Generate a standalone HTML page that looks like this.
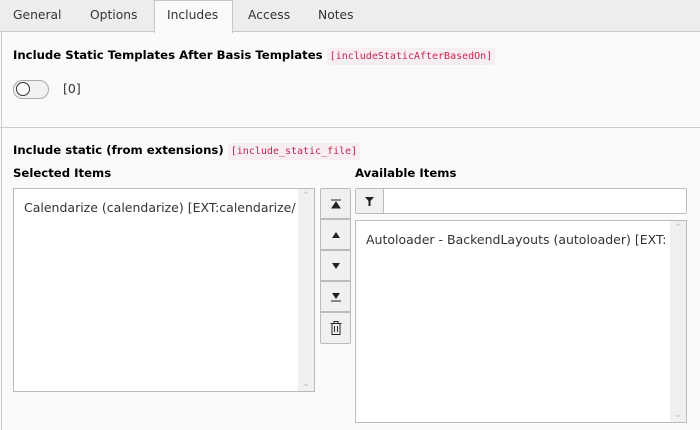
<!DOCTYPE html>
<html><head><meta charset="utf-8"><style>
*{box-sizing:border-box;margin:0;padding:0}
body{width:700px;height:430px;overflow:hidden;background:#fafafa;font-family:"DejaVu Sans",Verdana,sans-serif;font-size:12.5px;color:#333;position:relative}
.abs{position:absolute}
.tabs{left:0;top:0;width:700px;height:32px;background:#ededed;border-bottom:1px solid #c8c8c8}
.tab{position:absolute;top:8px;font-size:12.3px;color:#333}
.active{left:154px;top:0;width:79px;height:33px;background:#fafafa;border:1px solid #c8c8c8;border-bottom:none}
.lbl{font-weight:bold;font-size:11.7px;color:#000}
code{font-family:"DejaVu Sans Mono","Liberation Mono",monospace;font-size:10px;color:#c7254e;background:#f7eef1;padding:3px 3px;border-radius:2px;font-weight:normal}
.box{background:#fff;border:1px solid #bbb}
.sb{position:absolute;right:0;top:0;bottom:0;width:16px;background:#f0f0f0;color:#bbb;font-size:9px;text-align:center}
.btn{position:absolute;left:320px;width:31px;height:31px;background:#f0f0f0;border:1px solid #bbb;display:flex;align-items:center;justify-content:center}
</style></head><body>
<div class="abs tabs"></div>
<div class="abs" style="left:1px;top:32px;width:1px;height:398px;background:#ccc"></div>
<div class="abs active"></div>
<div class="tab" style="left:13px">General</div>
<div class="tab" style="left:90px">Options</div>
<div class="tab" style="left:167px">Includes</div>
<div class="tab" style="left:248px">Access</div>
<div class="tab" style="left:318px">Notes</div>

<div class="abs lbl" style="left:13px;top:48px">Include Static Templates After Basis Templates <code>[includeStaticAfterBasedOn]</code></div>
<div class="abs" style="left:13px;top:80px;width:36px;height:19px;border:1px solid #aaa;border-radius:10px;background:#f2f2f2"></div>
<div class="abs" style="left:16px;top:82px;width:14px;height:14px;border:1px solid #333;border-radius:50%;background:#fff"></div>
<div class="abs" style="left:63px;top:81px">[0]</div>
<div class="abs" style="left:0;top:127px;width:700px;height:1px;background:#ccc"></div>

<div class="abs lbl" style="left:13px;top:143px">Include static (from extensions) <code>[include_static_file]</code></div>
<div class="abs lbl" style="left:13px;top:166px">Selected Items</div>
<div class="abs lbl" style="left:355px;top:166px">Available Items</div>

<div class="abs box" style="left:13px;top:188px;width:302px;height:204px;overflow:hidden">
<div style="position:absolute;left:10px;top:11px;white-space:nowrap">Calendarize (calendarize) [EXT:calendarize/</div>
<div class="sb"><div style="position:absolute;top:2px;width:16px">&#8963;</div><div style="position:absolute;bottom:2px;width:16px">&#8964;</div></div>
</div>

<div class="btn" style="top:188px;border-radius:2px 2px 0 0"><svg width="10" height="10"><path d="M0 1h10M5 3L1 9h8z" stroke="#222" fill="#222"/></svg></div>
<div class="btn" style="top:219px"><svg width="10" height="8"><path d="M5 1L1 7h8z" fill="#222"/></svg></div>
<div class="btn" style="top:250px"><svg width="10" height="8"><path d="M1 1h8L5 7z" fill="#222"/></svg></div>
<div class="btn" style="top:281px"><svg width="10" height="10"><path d="M1 1h8L5 7z" fill="#222"/><path d="M0 9h10" stroke="#222"/></svg></div>
<div class="btn" style="top:312px;height:32px;border-radius:0 0 2px 2px"><svg width="12" height="14" fill="none" stroke="#222"><path d="M0.5 2.5h11M4 2.5V0.5h4v2M2 2.5v11h8v-11M4.5 5v6M7.5 5v6"/></svg></div>

<div class="abs box" style="left:355px;top:188px;width:332px;height:26px;border-radius:2px"></div>
<div class="abs" style="left:356px;top:189px;width:28px;height:24px;background:#f0f0f0;border-right:1px solid #bbb;display:flex;align-items:center;justify-content:center"><svg width="9" height="9"><path d="M0 0h9L5.5 4v5h-2V4z" fill="#222"/></svg></div>

<div class="abs box" style="left:355px;top:220px;width:332px;height:203px;overflow:hidden">
<div style="position:absolute;left:10px;top:11px;white-space:nowrap;width:304px;overflow:hidden">Autoloader - BackendLayouts (autoloader) [EXT:</div>
<div class="sb"><div style="position:absolute;top:2px;width:16px">&#8963;</div><div style="position:absolute;bottom:2px;width:16px">&#8964;</div></div>
</div>
</body></html>
